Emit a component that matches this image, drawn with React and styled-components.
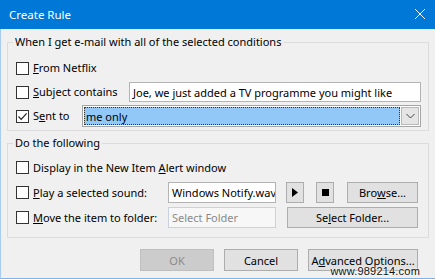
import React from "react";
import styled, { createGlobalStyle } from "styled-components";

const GlobalStyle = createGlobalStyle`
  html, body { margin: 0; padding: 0; background: #f0f0f0; }
  body { font-family: "Noto Sans", "Segoe UI", sans-serif; font-size: 11px; color: #000; }
  * { box-sizing: border-box; }
`;

const Window = styled.div`
  position: relative;
  width: 435px;
  height: 279px;
  display: flex;
  flex-direction: column;
  overflow: hidden;
  background: #f0f0f0;
`;

const TitleBar = styled.div`
  height: 29px;
  flex: 0 0 29px;
  background: #0078d7;
  color: #fff;
  display: flex;
  align-items: center;
  justify-content: space-between;
  padding: 0 10px 1px 9px;
  font-size: 11.5px;
`;

const Body = styled.div`
  flex: 1;
  display: flex;
  flex-direction: column;
  padding: 0 6px;
  border-left: 1px solid #a9cbed;
  border-bottom: 1px solid #7fb2e3;
`;

const Group = styled.fieldset`
  margin: ${(p) => p.$mt}px 0 0;
  padding: 0;
  border: 1px solid #dcdcdc;
  min-width: 0;
`;

const Legend = styled.legend`
  margin-left: 5px;
  padding: 0 2px;
  line-height: 16px;
  font-size: 11px;
`;

const GroupContent = styled.div`
  padding: ${(p) => p.$pad};
  display: grid;
  row-gap: ${(p) => p.$gap}px;
  grid-auto-rows: ${(p) => p.$row}px;
`;

const Row = styled.div`
  display: flex;
  align-items: center;
  height: 100%;
`;

const Grid2 = styled.div`
  padding: 6px 10px 9px 8px;
  display: grid;
  grid-template-columns: 152px 108px 28px 30px 84px;
  grid-template-rows: 21px 21px 21px;
  row-gap: 4px;
  align-items: center;
`;

const Span = styled.div`
  grid-column: ${(p) => p.$col};
  display: flex;
  align-items: center;
  justify-content: ${(p) => p.$justify || "flex-start"};
  height: 100%;
`;

const CheckLabel = styled.label`
  display: inline-flex;
  align-items: center;
  gap: 4px;
  white-space: nowrap;
  line-height: 14px;
`;

const Box = styled.span`
  width: 13px;
  height: 13px;
  border: 1px solid #333;
  background: #fff;
  display: inline-flex;
  align-items: center;
  justify-content: center;
`;

const TextBox = styled.div`
  margin-left: ${(p) => (p.$auto ? "auto" : "0")};
  width: ${(p) => (p.$w ? p.$w + "px" : "100%")};
  height: ${(p) => p.$h}px;
  border: 1px solid ${(p) => (p.$disabled ? "#c8d3de" : "#b4b4b4")};
  background: ${(p) => (p.$disabled ? "#f7f7f7" : "#fff")};
  color: ${(p) => (p.$disabled ? "#8a8a8a" : "#000")};
  display: flex;
  align-items: center;
  padding: 0 3px;
  white-space: nowrap;
  overflow: hidden;
`;

const Combo = styled.div`
  margin-left: auto;
  width: 339px;
  height: 22px;
  border: 1px solid #a5a5a5;
  background: #fff;
  display: flex;
  align-items: stretch;
  padding: 1px;
  gap: 1px;
`;

const ComboValue = styled.div`
  flex: 1;
  background: #91c8f8;
  border: 1px dotted #333;
  display: flex;
  align-items: center;
  padding-left: 1px;
`;

const DropBtn = styled.div`
  width: 18px;
  background: #e5e5e5;
  border: 1px solid #b9b9b9;
  display: flex;
  align-items: center;
  justify-content: center;
`;

const Button = styled.div`
  width: ${(p) => p.$w}px;
  height: ${(p) => p.$h || 21}px;
  background: ${(p) => (p.$disabled ? "#cccccc" : "#e1e1e1")};
  border: 1px solid ${(p) => (p.$disabled ? "#bfbfbf" : "#adadad")};
  color: ${(p) => (p.$disabled ? "#8a8a8a" : "#000")};
  display: flex;
  align-items: center;
  justify-content: center;
  white-space: nowrap;
`;

const Footer = styled.div`
  margin-top: 11px;
  display: flex;
  justify-content: flex-end;
  gap: 10px;
  padding-right: 11px;
`;

const Watermark = styled.div`
  position: absolute;
  right: 15px;
  bottom: 2px;
  font-family: "Liberation Sans", Arial, sans-serif;
  font-size: 11px;
  color: #111;
  text-shadow: 0 0 2px #fff, 0 0 2px #fff;
  letter-spacing: 0.2px;
`;

const Check = ({ checked }) => (
  <Box>
    {checked && (
      <svg width="11" height="11" viewBox="0 0 11 11">
        <path d="M1.5 5.5 L4.2 8.3 L9.6 2.4" fill="none" stroke="#222" strokeWidth="1.2" />
      </svg>
    )}
  </Box>
);

const Chevron = () => (
  <svg width="9" height="6" viewBox="0 0 9 6">
    <path d="M0.5 1 L4.5 5 L8.5 1" fill="none" stroke="#444" strokeWidth="1" />
  </svg>
);

export default function App() {
  return (
    <>
      <GlobalStyle />
      <Window>
        <TitleBar>
          <span>Create Rule</span>
          <svg width="10" height="10" viewBox="0 0 10 10">
            <path d="M0 0 L10 10 M10 0 L0 10" stroke="#fff" strokeWidth="1" />
          </svg>
        </TitleBar>
        <Body>
          <Group $mt={5}>
            <Legend>When I get e-mail with all of the selected conditions</Legend>
            <GroupContent $pad="7px 7px 3px 8px" $gap={2} $row={22}>
              <Row>
                <CheckLabel>
                  <Check />
                  <span><u>F</u>rom Netflix</span>
                </CheckLabel>
              </Row>
              <Row>
                <CheckLabel>
                  <Check />
                  <span><u>S</u>ubject contains</span>
                </CheckLabel>
                <TextBox $auto $w={292} $h={20}>
                  Joe, we just added a TV programme you might like
                </TextBox>
              </Row>
              <Row>
                <CheckLabel>
                  <Check checked />
                  <span>S<u>e</u>nt to</span>
                </CheckLabel>
                <Combo>
                  <ComboValue>me only</ComboValue>
                  <DropBtn>
                    <Chevron />
                  </DropBtn>
                </Combo>
              </Row>
            </GroupContent>
          </Group>
          <Group $mt={4}>
            <Legend>Do the following</Legend>
            <Grid2>
              <Span $col="1 / 6">
                <CheckLabel>
                  <Check />
                  <span>Display in the New Item <u>A</u>lert window</span>
                </CheckLabel>
              </Span>
              <Span $col="1">
                <CheckLabel>
                  <Check />
                  <span><u>P</u>lay a selected sound:</span>
                </CheckLabel>
              </Span>
              <Span $col="2">
                <TextBox $h={21}>Windows Notify.wav</TextBox>
              </Span>
              <Span $col="3" $justify="flex-end">
                <Button $w={18}>
                  <svg width="6" height="9" viewBox="0 0 6 9">
                    <path d="M0 0 L6 4.5 L0 9 Z" fill="#000" />
                  </svg>
                </Button>
              </Span>
              <Span $col="4" $justify="flex-end">
                <Button $w={18}>
                  <svg width="7" height="7" viewBox="0 0 7 7">
                    <rect width="7" height="7" fill="#000" />
                  </svg>
                </Button>
              </Span>
              <Span $col="5" $justify="flex-end">
                <Button $w={71}>Bro<u>w</u>se...</Button>
              </Span>
              <Span $col="1">
                <CheckLabel>
                  <Check />
                  <span><u>M</u>ove the item to folder:</span>
                </CheckLabel>
              </Span>
              <Span $col="2">
                <TextBox $h={21} $disabled>Select Folder</TextBox>
              </Span>
              <Span $col="3 / 6" $justify="flex-end">
                <Button $w={131}>Se<u>l</u>ect Folder...</Button>
              </Span>
            </Grid2>
          </Group>
          <Footer>
            <Button $w={74} $h={22} $disabled>OK</Button>
            <Button $w={74} $h={22}>Cancel</Button>
            <Button $w={110} $h={22}>A<u>d</u>vanced Options...</Button>
          </Footer>
        </Body>
        <Watermark>www.989214.com</Watermark>
      </Window>
    </>
  );
}
